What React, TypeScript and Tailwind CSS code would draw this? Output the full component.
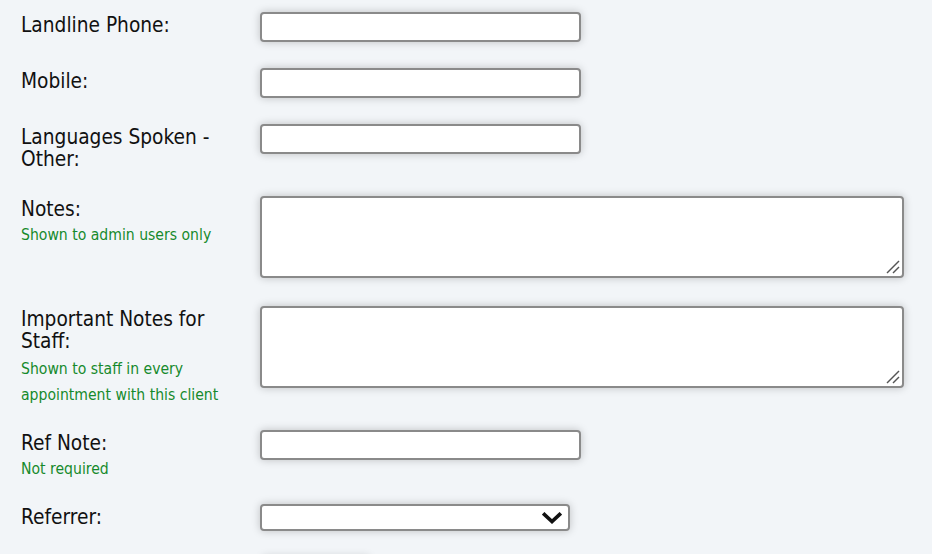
import React from "react";

const font = { fontFamily: '"DejaVu Sans Condensed", "DejaVu Sans", sans-serif' };

function Label({ lines, hint, hintGap = "mt-[2px]" }: { lines: string[]; hint?: string[]; hintGap?: string }) {
  return (
    <div className="w-[239px] shrink-0 pt-[2px]">
      {lines.map((l, i) => (
        <div key={i} className="text-[20.7px] leading-[22px] text-[#111]">
          {l}
        </div>
      ))}
      {hint && (
        <div className={hintGap}>
          {hint.map((h, i) => (
            <div key={i} className="text-[15.6px] leading-[26px] text-[#168a2c]">
              {h}
            </div>
          ))}
        </div>
      )}
    </div>
  );
}

const boxCls =
  "block bg-white border-2 border-[#8a8a8a] rounded-[4px] shadow-[0_0_9px_rgba(0,0,0,0.22)] outline-none";

function TextInput() {
  return <input type="text" className={`${boxCls} w-[321px] h-[30px]`} />;
}

function TextArea() {
  return (
    <div className="relative w-[644px] h-[82px]">
      <textarea className={`${boxCls} w-[644px] h-[82px] resize-none`} />
      <svg className="absolute right-[3px] bottom-[3px] pointer-events-none" width="16" height="16" viewBox="0 0 16 16">
        <line x1="2" y1="14" x2="14" y2="2" stroke="#555" strokeWidth="1.4" />
        <line x1="8" y1="14" x2="14" y2="8" stroke="#555" strokeWidth="1.4" />
      </svg>
    </div>
  );
}

function Select() {
  return (
    <div className="relative w-[310px] h-[27px]">
      <select className={`${boxCls} w-[310px] h-[27px] appearance-none`}>
        <option></option>
      </select>
      <svg
        className="absolute right-[8px] top-[8px] pointer-events-none"
        width="20"
        height="12"
        viewBox="0 0 20 12"
      >
        <polyline
          points="2.5,2.5 10,9.5 17.5,2.5"
          fill="none"
          stroke="#111"
          strokeWidth="3.6"
          strokeLinecap="square"
        />
      </svg>
    </div>
  );
}

export default function App() {
  return (
    <div className="w-[932px] h-[554px] overflow-hidden bg-[#f2f5f8] pl-[21px] pt-[12px]" style={font}>
      <div className="flex h-[56px]">
        <Label lines={["Landline Phone:"]} />
        <TextInput />
      </div>
      <div className="flex h-[56px]">
        <Label lines={["Mobile:"]} />
        <TextInput />
      </div>
      <div className="flex h-[72px]">
        <Label lines={["Languages Spoken -", "Other:"]} />
        <TextInput />
      </div>
      <div className="flex h-[110px]">
        <Label lines={["Notes:"]} hint={["Shown to admin users only"]} />
        <TextArea />
      </div>
      <div className="flex h-[124px]">
        <Label
          lines={["Important Notes for", "Staff:"]}
          hint={["Shown to staff in every", "appointment with this client"]}
          hintGap="mt-[4px]"
        />
        <TextArea />
      </div>
      <div className="flex h-[74px]">
        <Label lines={["Ref Note:"]} hint={["Not required"]} />
        <TextInput />
      </div>
      <div className="flex h-[52px]">
        <Label lines={["Referrer:"]} />
        <Select />
      </div>
      <div className="flex">
        <div className="w-[241px] shrink-0" />
        <div className="w-[108px] h-[30px] rounded-[4px] bg-[#f2f5f8] shadow-[0_0_9px_rgba(0,0,0,0.15)]" />
      </div>
    </div>
  );
}
